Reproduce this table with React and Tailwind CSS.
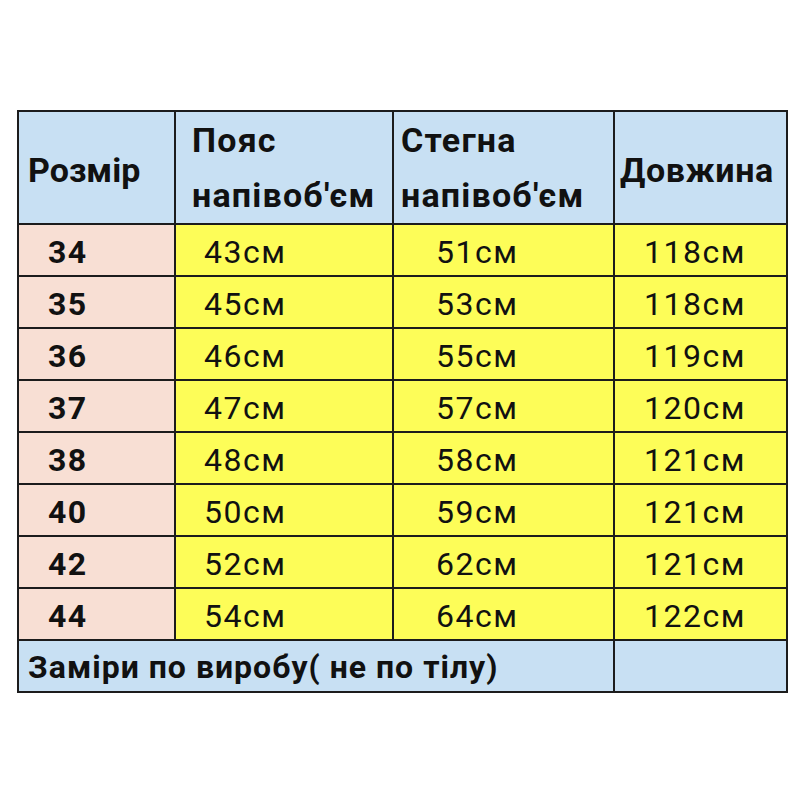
import React from "react";

const rows = [
  ["34", "43см", "51см", "118см"],
  ["35", "45см", "53см", "118см"],
  ["36", "46см", "55см", "119см"],
  ["37", "47см", "57см", "120см"],
  ["38", "48см", "58см", "121см"],
  ["40", "50см", "59см", "121см"],
  ["42", "52см", "62см", "121см"],
  ["44", "54см", "64см", "122см"],
];

export default function App() {
  return (
    <div
      className="w-[800px] h-[800px] bg-white pt-[110px] pl-[17px] text-[#111]"
      style={{ fontFamily: "Roboto, 'Noto Sans', sans-serif" }}
    >
      <div className="grid grid-cols-[155px_216px_219px_171px] gap-[2px] p-[2px] bg-[#1c1c1c] w-[771px]">
        {/* шапка */}
        <div className="bg-[#c8e0f3] h-[111px] flex items-center pl-[9px] pt-[6px] font-bold text-[34px]">
          Розмір
        </div>
        <div className="bg-[#c8e0f3] h-[111px] flex flex-col justify-center pl-[16px] font-bold text-[34px] tracking-[1.2px] leading-[55px]">
          <span>Пояс</span>
          <span>напівоб'єм</span>
        </div>
        <div className="bg-[#c8e0f3] h-[111px] flex flex-col justify-center pl-[7px] font-bold text-[34px] tracking-[1.2px] leading-[55px]">
          <span>Стегна</span>
          <span>напівоб'єм</span>
        </div>
        <div className="bg-[#c8e0f3] h-[111px] flex items-center pl-[5px] pt-[6px] font-bold text-[34px] tracking-[0.6px]">
          Довжина
        </div>

        {rows.map((r) => (
          <React.Fragment key={r[0]}>
            <div className="bg-[#f8dfd4] h-[50px] flex items-center pl-[29px] pt-[4px] font-bold text-[32px] tracking-[1.5px]">
              {r[0]}
            </div>
            <div className="bg-[#fdfd58] h-[50px] flex items-center pl-[28px] pt-[4px] text-[32px] tracking-[1.5px]">
              {r[1]}
            </div>
            <div className="bg-[#fdfd58] h-[50px] flex items-center pl-[42px] pt-[4px] text-[32px] tracking-[1.5px]">
              {r[2]}
            </div>
            <div className="bg-[#fdfd58] h-[50px] flex items-center pl-[29px] pt-[4px] text-[32px] tracking-[1.5px]">
              {r[3]}
            </div>
          </React.Fragment>
        ))}

        <div className="col-span-3 bg-[#c8e0f3] h-[50px] flex items-center pl-[9px] pt-[2px] font-bold text-[32px] tracking-[1px] whitespace-nowrap">
          Заміри по виробу( не по тілу)
        </div>
        <div className="bg-[#c8e0f3] h-[50px]"></div>
      </div>
    </div>
  );
}
